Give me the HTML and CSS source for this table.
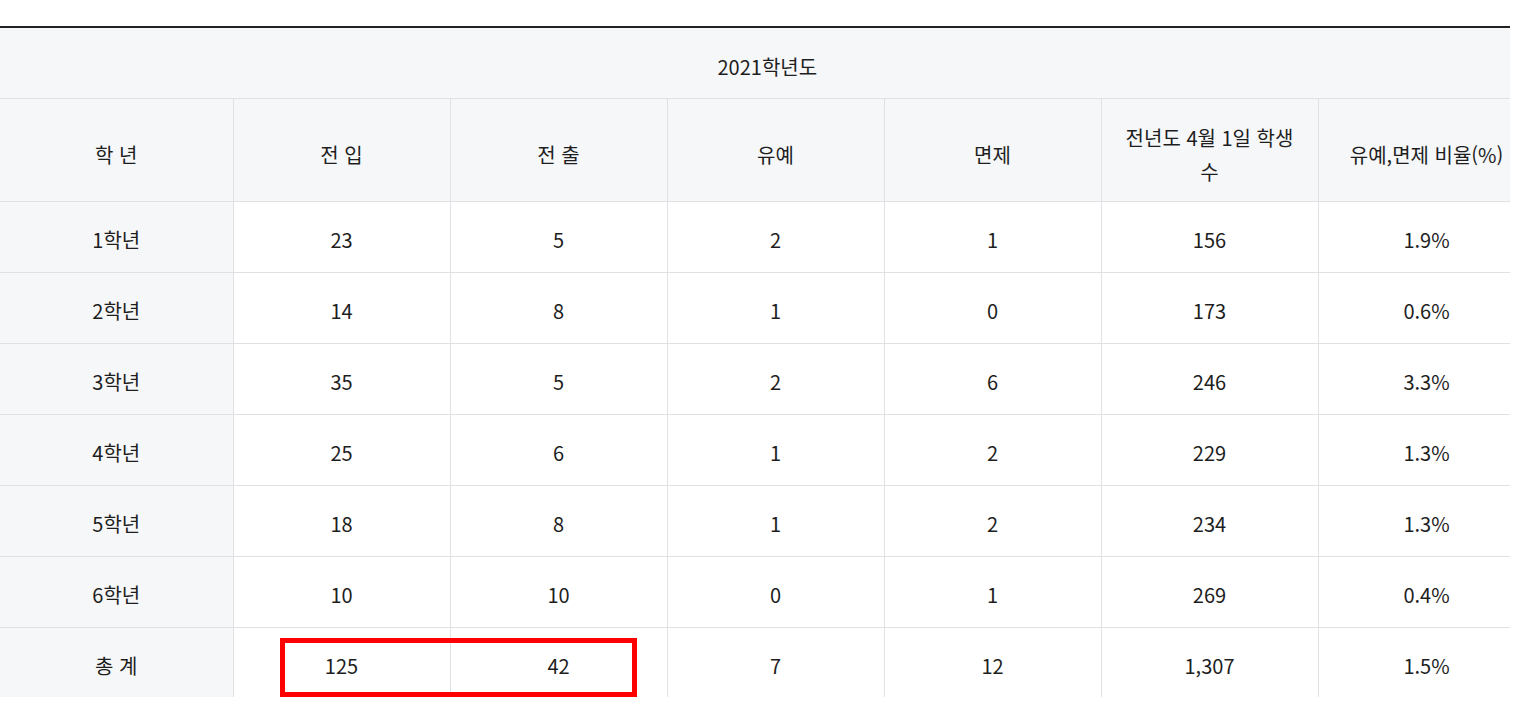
FILE: index.html
```html
<!DOCTYPE html>
<html lang="ko">
<head>
<meta charset="utf-8">
<title>2021학년도</title>
<link rel="stylesheet" href="styles.css">
</head>
<body>
<div class="page">
  <div class="table-wrap">
    <table class="stats">
      <colgroup>
        <col class="c-first">
        <col class="c"><col class="c"><col class="c"><col class="c"><col class="c"><col class="c">
      </colgroup>
      <thead>
        <tr class="year-row"><th colspan="7">2021학년도</th></tr>
        <tr class="head-row">
          <th>학 년</th>
          <th>전 입</th>
          <th>전 출</th>
          <th>유예</th>
          <th>면제</th>
          <th>전년도 4월 1일 학생 수</th>
          <th>유예,면제 비율(%)</th>
        </tr>
      </thead>
      <tbody>
        <tr><th>1학년</th><td>23</td><td>5</td><td>2</td><td>1</td><td>156</td><td>1.9%</td></tr>
        <tr><th>2학년</th><td>14</td><td>8</td><td>1</td><td>0</td><td>173</td><td>0.6%</td></tr>
        <tr><th>3학년</th><td>35</td><td>5</td><td>2</td><td>6</td><td>246</td><td>3.3%</td></tr>
        <tr><th>4학년</th><td>25</td><td>6</td><td>1</td><td>2</td><td>229</td><td>1.3%</td></tr>
        <tr><th>5학년</th><td>18</td><td>8</td><td>1</td><td>2</td><td>234</td><td>1.3%</td></tr>
        <tr><th>6학년</th><td>10</td><td>10</td><td>0</td><td>1</td><td>269</td><td>0.4%</td></tr>
        <tr><th>총 계</th><td>125</td><td>42</td><td>7</td><td>12</td><td>1,307</td><td>1.5%</td></tr>
      </tbody>
    </table>
  </div>
  <div class="highlight"></div>
</div>
</body>
</html>
```

FILE: styles.css
```css
html, body {
  margin: 0;
  padding: 0;
  background: #fff;
}

body {
  font-family: "Noto Sans CJK KR", "Noto Sans", sans-serif;
  color: #1e1e1e;
}

.page {
  position: relative;
  padding-top: 26px;
}

.table-wrap {
  width: 1510px;
  height: 669px;
  overflow: hidden;
  border-top: 2px solid #222;
}

.stats {
  table-layout: fixed;
  width: 1535px;
  border-collapse: collapse;
  font-size: 20px;
  line-height: 34px;
}

.c-first { width: 233px; }
.c { width: 217px; }

.stats th,
.stats td {
  padding: 21px 16px 15px;
  text-align: center;
  border-right: 1px solid #dfe1e4;
  border-bottom: 1px solid #dfe1e4;
}

.stats .year-row th {
  padding-top: 22px;
  padding-bottom: 14px;
}

.stats .head-row th {
  padding-top: 22px;
  padding-bottom: 12px;
}

.stats th {
  background: #f6f7f9;
  font-weight: 400;
}

.stats td {
  background: #fff;
  font-weight: 400;
}

.highlight {
  position: absolute;
  left: 280px;
  top: 638px;
  width: 347px;
  height: 49px;
  border: 5px solid #ff0000;
}
```
